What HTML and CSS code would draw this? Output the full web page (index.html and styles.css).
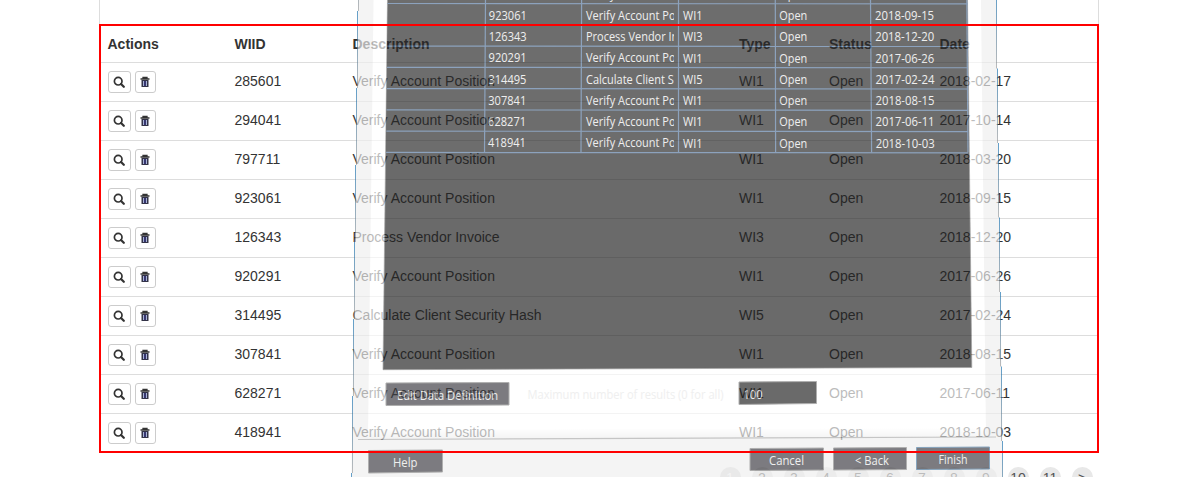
FILE: index.html
```html
<!DOCTYPE html>
<html lang="en">
<head>
<meta charset="utf-8">
<title>Work items</title>
<link rel="stylesheet" href="styles.css">
</head>
<body>
<svg class="defs" aria-hidden="true">
  <symbol id="search" viewBox="0 0 12 12"><circle cx="5.200" cy="5.200" r="3.800" fill="none" stroke="#333" stroke-width="1.7"/><path d="M8 8L10.800 10.800" stroke="#333" stroke-width="2.2" stroke-linecap="round"/></symbol>
  <symbol id="trash" viewBox="0 0 12 12"><path d="M4 2.500V1.500h4v1M1.500 3h9" fill="none" stroke="#333" stroke-width="1.3"/><path d="M2.500 4h7V11h-7z" fill="#333347"/><path d="M4.500 5V10M7.500 5V10" stroke="#a9b4d8"/><path d="M6 5V10" stroke="#3c3c9a"/></symbol>
</svg>
<main class="panel">
  <div class="lead"></div>
  <div class="table" id="table">
    <div class="row head"><span>Actions</span><span>WIID</span><span>Description</span><span>Type</span><span>Status</span><span>Date</span></div>
  </div>
  <nav class="pages" id="pages"></nav>
</main>
<svg class="dialog" viewBox="0 0 1198 477">
  <defs>
    <linearGradient id="edge" x1="0" y1="0" x2="0" y2="1"><stop offset="0" stop-color="#1771b0"/><stop offset=".45" stop-color="#4d7d9f"/><stop offset="1" stop-color="#999"/></linearGradient>
    <linearGradient id="foot" x1="0" y1="0" x2="0" y2="1"><stop offset="0" stop-color="#fff"/><stop offset="1" stop-color="#efefef"/></linearGradient>
    <clipPath id="desc"><path d="M582 0H674V160H582z"/></clipPath>
  </defs>
  <path d="M358.5 0H996L1003 477H351.500z" fill="#efefef"/>
  <path d="M373.500 0H981L986 432H368z" fill="#fff"/>
  <path d="M368 430L986 428V437L368 439z" fill="url(#foot)"/>
  <path d="M387.500 0H967.500L971.800 367.500L383 369.700z" fill="#222" stroke="#777" stroke-width=".7"/>
  <path d="M388 0H967L968.500 152.500H386z" fill="#272727"/>
  <path d="M358 439.500L996 437" stroke="#aaa" stroke-width="1.2"/>
  <g id="edges"></g>
  <g id="grid" class="grid"></g>
  <g id="cells" class="label"></g>
  <g class="button">
    <path d="M386 383L509 382.500V405L386 405.500z"/>
    <path d="M368.500 450.500L442.500 450V472L368.500 473z"/>
    <path d="M750 448.500L823.500 448V470L750 470.500z"/>
    <path d="M833.500 448L906.500 447.500V469.500L833.500 470z"/>
    <path class="primary" d="M916.500 447.500L989.500 447V469L916.500 469.500z"/>
    <path class="input" d="M739 382L816.500 381.500V403.500L739 404.500z"/>
  </g>
  <g class="label">
    <text x="397" y="400" textLength="101" lengthAdjust="spacingAndGlyphs">Edit Data Definition</text>
    <text class="faint" x="527.500" y="399" textLength="196" lengthAdjust="spacingAndGlyphs">Maximum number of results (0 for all)</text>
    <text x="743.500" y="398.500" textLength="19" lengthAdjust="spacingAndGlyphs">100</text>
    <text x="393" y="467" textLength="24.500" lengthAdjust="spacingAndGlyphs">Help</text>
    <text x="769" y="465" textLength="35" lengthAdjust="spacingAndGlyphs">Cancel</text>
    <text x="855" y="465" textLength="34" lengthAdjust="spacingAndGlyphs">&lt; Back</text>
    <text x="938.500" y="464" textLength="29" lengthAdjust="spacingAndGlyphs">Finish</text>
  </g>
</svg>
<div class="highlight"></div>
<script src="app.js"></script>
</body>
</html>
```
FILE: styles.css
```css
* { box-sizing: border-box; }
body { margin: 0; height: 477px; overflow: hidden; position: relative; background: #fff; color: #333; font: 14px/20px "Liberation Sans", Arial, sans-serif; }
.defs { display: none; }
.panel { width: 1000px; margin-left: 99px; }
.lead { height: 24px; border-left: 1px solid #ddd; border-right: 1px solid #ddd; }
.row { display: grid; grid-template-columns: 127px 118px 386.5px 90px 110.5px 1fr; height: 39px; padding: 8px 8px 0 8.5px; border-bottom: 1px solid #ddd; white-space: nowrap; }
.row:last-child { border-bottom: 0; }
.head { font-weight: bold; }
.head > span { padding-top: 2px; }
.actions { display: flex; gap: 4px; }
.actions button { width: 23px; height: 22px; padding: 4px; border: 1px solid #ccc; border-radius: 3px; background: #fff; }
.actions button + button { width: 21px; padding: 4px 3px; }
.actions svg { display: block; width: 12px; height: 12px; }
.pages { display: flex; justify-content: flex-end; gap: 11px; margin-top: 14px; padding-right: 6.5px; }
.pages span { flex: none; width: 21px; height: 21px; border-radius: 50%; background: #e8e8e8; color: #555; text-align: center; line-height: 23px; }
.pages .active { background: #ddd; color: #fff; }
.dialog { position: absolute; left: 0; top: 0; width: 1198px; height: 477px; opacity: .67; }
.label { font: 12px "Open Sans", "Noto Sans", sans-serif; fill: #e8e8e8; }
.faint { fill: #e8e8e8; }
.grid { stroke: #55769d; stroke-width: 1.2; }
.button { fill: #3d3c42; stroke: #888; stroke-width: 1; }
.primary { stroke: #4a789f; }
.input { fill: #222; }
.highlight { position: absolute; left: 99px; top: 24px; width: 1000px; height: 429px; border: 2px solid #f00; }
```
FILE: app.js
```js
const V = 'Verify Account Position';
const items = [
  ['285601', V, 'WI1', '2018-02-17'],
  ['294041', V, 'WI1', '2017-10-14'],
  ['797711', V, 'WI1', '2018-03-20'],
  ['923061', V, 'WI1', '2018-09-15'],
  ['126343', 'Process Vendor Invoice', 'WI3', '2018-12-20'],
  ['920291', V, 'WI1', '2017-06-26'],
  ['314495', 'Calculate Client Security Hash', 'WI5', '2017-02-24'],
  ['307841', V, 'WI1', '2018-08-15'],
  ['628271', V, 'WI1', '2017-06-11'],
  ['418941', V, 'WI1', '2018-10-03']
];
const icon = n => `<button><svg><use href="#${n}"/></svg></button>`;
document.getElementById('table').insertAdjacentHTML('beforeend', items.map(([id, d, t, date]) =>
  `<div class="row"><span class="actions">${icon('search')}${icon('trash')}</span><span>${id}</span><span>${d}</span><span>${t}</span><span>Open</span><span>${date}</span></div>`).join(''));
document.getElementById('pages').innerHTML = [1, 2, 3, 4, 5, 6, 7, 8, 9, 10, 11, '&gt;']
  .map(p => `<span${p === 1 ? ' class="active"' : ''}>${p}</span>`).join('');

// Dialog grid, seen in slight perspective
let lines = '';
for (let i = 0; i < 8; i++) {
  const y = 3.5 + i * 21.28;
  lines += `<path d="M${387.5 - i * .2} ${y}L968 ${y + .4}"/>`;
}
[[485.5, 484.5], [581.6, 581], [678.5, 678.5], [775.3, 775.6], [870.5, 871.6], [966.8, 968]]
  .forEach(([a, b]) => { lines += `<path d="M${a} 0L${b} 152.5"/>`; });
document.getElementById('grid').innerHTML = lines;

const fit = (x, y, w, s) => `<text x="${x}" y="${y}" textLength="${w}" lengthAdjust="spacingAndGlyphs">${s}</text>`;
let cells = '';
items.slice(2).forEach(([id, d, t, date], i) => {
  const y = -1.5 + i * 21.28;
  cells += fit(489 - i * .15, y, 38, id)
    + `<g clip-path="url(#desc)"><text transform="translate(586 ${y}) scale(.915 1)">${d}</text></g>`
    + fit(683, y + .2, 19.5, t)
    + fit(779.3, y + .3, 28, 'Open')
    + fit(875 + i * .1, y + .3, 59, date);
});
document.getElementById('cells').innerHTML = cells;

// Stepped window edges
const edge = (x, y, h) => `<rect x="${x}" y="${y}" width="1" height="${h}" fill="url(#edge)"/>`;
let edges = '';
for (let i = 0; i < 8; i++) {
  edges += edge(358 - i, 11 + (i - 1) * 77, 77) + edge(996 + i, -6 + i * 74.5, 74.5);
}
document.getElementById('edges').innerHTML = edges;
```
